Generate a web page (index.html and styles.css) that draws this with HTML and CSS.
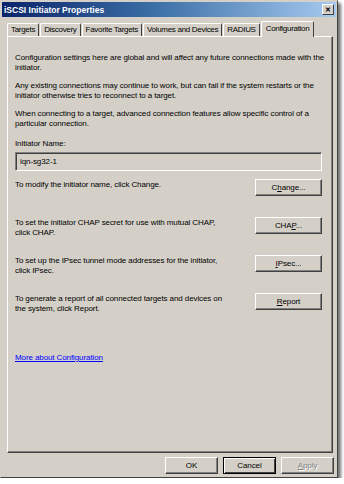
FILE: index.html
```html
<!DOCTYPE html>
<html lang="en">
<head>
    <meta charset="UTF-8">
    <title>iSCSI Initiator Properties</title>
    <link rel="stylesheet" href="styles.css">
</head>
<body>
    <div class="window">
        <div class="titlebar">
            <span class="title">iSCSI Initiator Properties</span>
            <span class="close">&#x2715;</span>
        </div>

        <div class="tabs">
            <div class="tab">Targets</div>
            <div class="tab">Discovery</div>
            <div class="tab">Favorite Targets</div>
            <div class="tab">Volumes and Devices</div>
            <div class="tab">RADIUS</div>
            <div class="tab active">Configuration</div>
        </div>

        <div class="panel">
            <p class="intro">Configuration settings here are global and will affect any future connections made with the initiator.</p>
            <p class="intro">Any existing connections may continue to work, but can fail if the system restarts or the initiator otherwise tries to reconnect to a target.</p>
            <p class="intro">When connecting to a target, advanced connection features allow specific control of a particular connection.</p>

            <div class="label">Initiator Name:</div>
            <div class="field">iqn-sg32-1</div>

            <div class="row">
                <span class="row-text">To modify the initiator name, click Change.</span>
                <button class="btn">C<u>h</u>ange...</button>
            </div>
            <div class="row">
                <span class="row-text">To set the initiator CHAP secret for use with mutual CHAP,<br>click CHAP.</span>
                <button class="btn">CHA<u>P</u>...</button>
            </div>
            <div class="row">
                <span class="row-text">To set up the IPsec tunnel mode addresses for the initiator,<br>click IPsec.</span>
                <button class="btn"><u>I</u>Psec...</button>
            </div>
            <div class="row">
                <span class="row-text">To generate a report of all connected targets and devices on<br>the system, click Report.</span>
                <button class="btn"><u>R</u>eport</button>
            </div>

            <a class="more" href="#">More about Configuration</a>
        </div>

        <div class="footer">
            <button class="btn small">OK</button>
            <button class="btn small default">Cancel</button>
            <button class="btn small disabled"><u>A</u>pply</button>
        </div>
    </div>
</body>
</html>
```

FILE: styles.css
```css
body {
    margin: 0;
    background-color: #ffffff;
    font-family: Tahoma, "Liberation Sans", Arial, sans-serif;
    font-size: 8px;
    letter-spacing: -0.1px;
    color: #000000;
}
.window {
    width: 338px;
    height: 478px;
    box-sizing: border-box;
    background-color: #d4d0c8;
    border: 1px solid #404040;
    border-top-color: #d4d0c8;
    border-left-color: #d4d0c8;
    box-shadow: 3px 3px 3px rgba(0, 0, 0, 0.55);
    display: flex;
    flex-direction: column;
}
.titlebar {
    height: 15px;
    margin: 1px 1px 0 1px;
    background: linear-gradient(to right, #0a246a, #3a6ea5 45%, #a6caf0);
    display: flex;
    align-items: center;
    justify-content: space-between;
    padding: 0 2px;
}
.title {
    color: #ffffff;
    font-weight: bold;
    font-size: 8.5px;
    letter-spacing: 0;
}
.close {
    width: 10px;
    height: 9px;
    background-color: #d4d0c8;
    border: 1px solid #ffffff;
    border-right-color: #404040;
    border-bottom-color: #404040;
    font-size: 7px;
    font-weight: bold;
    line-height: 9px;
    text-align: center;
    letter-spacing: 0;
}
.tabs {
    display: flex;
    align-items: flex-end;
    margin: 3px 0 0 6px;
    height: 16px;
}
.tab {
    height: 12px;
    line-height: 12px;
    padding: 0 3px;
    margin-right: 1px;
    border: 1px solid #ffffff;
    border-bottom: none;
    border-right-color: #404040;
    border-radius: 2px 2px 0 0;
    white-space: nowrap;
    letter-spacing: -0.3px;
}
.tab.active {
    height: 15px;
    line-height: 13px;
    margin-bottom: -1px;
    padding: 0 4px;
    background-color: #d4d0c8;
    position: relative;
    z-index: 1;
}
.panel {
    flex: 1;
    margin: 0 4px 0 6px;
    border: 1px solid #ffffff;
    border-right-color: #404040;
    border-bottom-color: #404040;
    box-shadow: inset -1px -1px 0 #808080;
    padding: 16px 10px 0 7px;
    display: flex;
    flex-direction: column;
}
.intro {
    margin: 0 0 8px 0;
    line-height: 10px;
    width: 312px;
}
.label {
    margin-top: 2px;
    line-height: 10px;
}
.field {
    margin: 3px 0 8px 0;
    height: 19px;
    box-sizing: border-box;
    border: 1px solid #808080;
    border-right-color: #ffffff;
    border-bottom-color: #ffffff;
    box-shadow: inset 1px 1px 0 #404040;
    padding: 3px 4px;
    line-height: 11px;
}
.row {
    display: flex;
    justify-content: space-between;
    align-items: flex-start;
    height: 38px;
}
.row-text {
    width: 226px;
    line-height: 10px;
    padding-top: 1px;
}
.btn {
    font-family: inherit;
    font-size: 8px;
    letter-spacing: -0.1px;
    color: #000000;
    width: 67px;
    height: 17px;
    padding: 0;
    background-color: #d4d0c8;
    border: 1px solid #ffffff;
    border-right-color: #404040;
    border-bottom-color: #404040;
    box-shadow: inset -1px -1px 0 #808080;
}
.more {
    margin-top: 22px;
    color: #0000ff;
    text-decoration: underline;
}
.footer {
    display: flex;
    justify-content: flex-end;
    gap: 5px;
    height: 24px;
    align-items: center;
    padding-right: 3px;
}
.btn.small {
    width: 53px;
}
.btn.default {
    border-color: #000000;
    box-shadow: inset 1px 1px 0 #ffffff, inset -1px -1px 0 #404040;
}
.btn.disabled {
    color: #808080;
    text-shadow: 1px 1px 0 #ffffff;
}
```
